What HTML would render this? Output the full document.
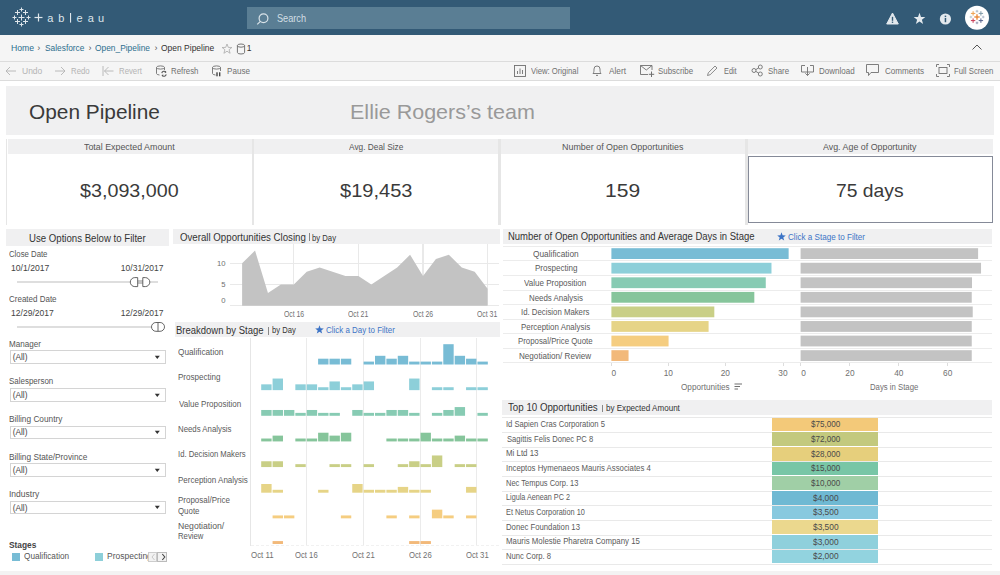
<!DOCTYPE html><html><head><meta charset="utf-8"><style>
html,body{margin:0;padding:0;}
body{width:1000px;height:575px;overflow:hidden;position:relative;background:#fff;font-family:"Liberation Sans",sans-serif;}
.t{position:absolute;white-space:nowrap;}
.r{position:absolute;box-sizing:border-box;}
svg.r{overflow:visible;}
</style></head><body>
<div class="r" style="left:0.00px;top:0.00px;width:1000.00px;height:35.00px;background:#335a76;"></div>
<div class="r" style="left:247.00px;top:7.00px;width:323.00px;height:21.50px;background:#5a7e94;"></div>
<svg class="r" style="left:254px;top:10px" width="18" height="18" viewBox="0 0 18 18"><circle cx="9.5" cy="8.3" r="4.4" fill="none" stroke="#d9e3e9" stroke-width="1.2"/><line x1="6.4" y1="11.4" x2="3.2" y2="14.4" stroke="#d9e3e9" stroke-width="1.2"/></svg>
<div class="t" style="left:277.39px;top:11.53px;font-size:10.5px;line-height:13.65px;color:#d3dee5;transform:scaleX(0.8729);transform-origin:0 0;">Search</div>
<svg class="r" style="left:0;top:0" width="120" height="35" viewBox="0 0 120 35"><line x1="18.5" y1="17.5" x2="24.5" y2="17.5" stroke="#dfe6eb" stroke-width="1.0"/><line x1="21.5" y1="14.5" x2="21.5" y2="20.5" stroke="#dfe6eb" stroke-width="1.0"/><line x1="15.0" y1="12.5" x2="20.0" y2="12.5" stroke="#dfe6eb" stroke-width="1.0"/><line x1="17.5" y1="10.0" x2="17.5" y2="15.0" stroke="#dfe6eb" stroke-width="1.0"/><line x1="23.0" y1="12.5" x2="28.0" y2="12.5" stroke="#dfe6eb" stroke-width="1.0"/><line x1="25.5" y1="10.0" x2="25.5" y2="15.0" stroke="#dfe6eb" stroke-width="1.0"/><line x1="15.0" y1="21.5" x2="20.0" y2="21.5" stroke="#dfe6eb" stroke-width="1.0"/><line x1="17.5" y1="19.0" x2="17.5" y2="24.0" stroke="#dfe6eb" stroke-width="1.0"/><line x1="23.0" y1="21.5" x2="28.0" y2="21.5" stroke="#dfe6eb" stroke-width="1.0"/><line x1="25.5" y1="19.0" x2="25.5" y2="24.0" stroke="#dfe6eb" stroke-width="1.0"/><line x1="19.5" y1="9.5" x2="23.5" y2="9.5" stroke="#dfe6eb" stroke-width="1.0"/><line x1="21.5" y1="7.5" x2="21.5" y2="11.5" stroke="#dfe6eb" stroke-width="1.0"/><line x1="19.5" y1="24.5" x2="23.5" y2="24.5" stroke="#dfe6eb" stroke-width="1.0"/><line x1="21.5" y1="22.5" x2="21.5" y2="26.5" stroke="#dfe6eb" stroke-width="1.0"/><line x1="12.5" y1="17.5" x2="16.5" y2="17.5" stroke="#dfe6eb" stroke-width="1.0"/><line x1="14.5" y1="15.5" x2="14.5" y2="19.5" stroke="#dfe6eb" stroke-width="1.0"/><line x1="26.5" y1="17.5" x2="30.5" y2="17.5" stroke="#dfe6eb" stroke-width="1.0"/><line x1="28.5" y1="15.5" x2="28.5" y2="19.5" stroke="#dfe6eb" stroke-width="1.0"/><line x1="34.5" y1="17.5" x2="42.5" y2="17.5" stroke="#dfe6eb" stroke-width="1.2"/><line x1="38.5" y1="13.5" x2="38.5" y2="21.5" stroke="#dfe6eb" stroke-width="1.2"/><rect x="70" y="13" width="1.1" height="9.6" fill="#dfe6eb"/></svg>
<div class="t" style="left:47.23px;top:10.94px;font-size:11px;line-height:14.3px;color:#dfe6eb;">a</div>
<div class="t" style="left:58.31px;top:10.94px;font-size:11px;line-height:14.3px;color:#dfe6eb;">b</div>
<div class="t" style="left:76.47px;top:10.94px;font-size:11px;line-height:14.3px;color:#dfe6eb;">e</div>
<div class="t" style="left:87.73px;top:10.94px;font-size:11px;line-height:14.3px;color:#dfe6eb;">a</div>
<div class="t" style="left:97.95px;top:10.94px;font-size:11px;line-height:14.3px;color:#dfe6eb;">u</div>
<svg class="r" style="left:885px;top:11px" width="15" height="15" viewBox="0 0 15 15"><path d="M7.5 2 L13.3 13 L1.7 13 Z" fill="#e3e9ee" stroke="#e3e9ee" stroke-width="1" stroke-linejoin="round"/><rect x="6.8" y="5.8" width="1.4" height="4" fill="#335a76"/><rect x="6.8" y="10.6" width="1.4" height="1.3" fill="#335a76"/></svg>
<svg class="r" style="left:912px;top:11px" width="15" height="15" viewBox="0 0 15 15"><path d="M7.5 1.8 L9 6 L13.3 6.1 L9.9 8.7 L11.1 12.9 L7.5 10.4 L3.9 12.9 L5.1 8.7 L1.7 6.1 L6 6 Z" fill="#e3e9ee"/></svg>
<svg class="r" style="left:938px;top:12px" width="15" height="15" viewBox="0 0 15 15"><circle cx="7.4" cy="7" r="5.6" fill="#e3e9ee"/><rect x="6.7" y="6" width="1.5" height="4.2" fill="#335a76"/><rect x="6.7" y="3.6" width="1.5" height="1.5" fill="#335a76"/></svg>
<svg class="r" style="left:964px;top:5px" width="26" height="26" viewBox="0 0 26 26"><circle cx="13" cy="12.85" r="12" fill="#ffffff"/><line x1="10.3" y1="12" x2="15.7" y2="12" stroke="#e8822f" stroke-width="1.3"/><line x1="13" y1="9.3" x2="13" y2="14.7" stroke="#e8822f" stroke-width="1.3"/><line x1="6.8999999999999995" y1="8.4" x2="11.3" y2="8.4" stroke="#eea04e" stroke-width="1.0"/><line x1="9.1" y1="6.2" x2="9.1" y2="10.600000000000001" stroke="#eea04e" stroke-width="1.0"/><line x1="14.7" y1="8.4" x2="19.099999999999998" y2="8.4" stroke="#7f9aa8" stroke-width="1.0"/><line x1="16.9" y1="6.2" x2="16.9" y2="10.600000000000001" stroke="#7f9aa8" stroke-width="1.0"/><line x1="6.8999999999999995" y1="15.6" x2="11.3" y2="15.6" stroke="#c83a52" stroke-width="1.0"/><line x1="9.1" y1="13.399999999999999" x2="9.1" y2="17.8" stroke="#c83a52" stroke-width="1.0"/><line x1="14.7" y1="15.6" x2="19.099999999999998" y2="15.6" stroke="#56628c" stroke-width="1.0"/><line x1="16.9" y1="13.399999999999999" x2="16.9" y2="17.8" stroke="#56628c" stroke-width="1.0"/><line x1="11.7" y1="6.2" x2="14.3" y2="6.2" stroke="#a8b6c2" stroke-width="0.9"/><line x1="13" y1="4.9" x2="13" y2="7.5" stroke="#a8b6c2" stroke-width="0.9"/><line x1="11.7" y1="17.9" x2="14.3" y2="17.9" stroke="#8a90ab" stroke-width="0.9"/><line x1="13" y1="16.599999999999998" x2="13" y2="19.2" stroke="#8a90ab" stroke-width="0.9"/><line x1="5.6000000000000005" y1="12" x2="8.200000000000001" y2="12" stroke="#b4c2cb" stroke-width="0.9"/><line x1="6.9" y1="10.7" x2="6.9" y2="13.3" stroke="#b4c2cb" stroke-width="0.9"/><line x1="17.9" y1="12" x2="20.5" y2="12" stroke="#a9b4c6" stroke-width="0.9"/><line x1="19.2" y1="10.7" x2="19.2" y2="13.3" stroke="#a9b4c6" stroke-width="0.9"/></svg>
<div class="r" style="left:0.00px;top:35.00px;width:1000.00px;height:26.00px;background:#f5f5f5;"></div>
<div class="r" style="left:0.00px;top:61.00px;width:1000.00px;height:1.00px;background:#dcdcdc;"></div>
<div class="t" style="left:11.31px;top:41.73px;font-size:9.3px;line-height:12.09px;color:#2c6e8e;transform:scaleX(0.9313);transform-origin:0 0;">Home</div>
<div class="t" style="left:37.29px;top:42.83px;font-size:9px;line-height:11.7px;color:#555;">›</div>
<div class="t" style="left:45.12px;top:41.73px;font-size:9.3px;line-height:12.09px;color:#2c6e8e;transform:scaleX(0.8978);transform-origin:0 0;">Salesforce</div>
<div class="t" style="left:88.49px;top:42.83px;font-size:9px;line-height:11.7px;color:#555;">›</div>
<div class="t" style="left:95.42px;top:41.73px;font-size:9.3px;line-height:12.09px;color:#2c6e8e;transform:scaleX(0.9008);transform-origin:0 0;">Open_Pipeline</div>
<div class="t" style="left:154.49px;top:42.83px;font-size:9px;line-height:11.7px;color:#555;">›</div>
<div class="t" style="left:160.92px;top:41.73px;font-size:9.3px;line-height:12.09px;color:#333;transform:scaleX(0.9120);transform-origin:0 0;">Open Pipeline</div>
<svg class="r" style="left:221px;top:42.5px" width="12" height="12" viewBox="0 0 12 12"><path d="M6 1 L7.3 4.4 L10.9 4.5 L8.1 6.7 L9.1 10.3 L6 8.2 L2.9 10.3 L3.9 6.7 L1.1 4.5 L4.7 4.4 Z" fill="none" stroke="#aaa" stroke-width="0.8"/></svg>
<svg class="r" style="left:236px;top:42.5px" width="10" height="12" viewBox="0 0 10 12"><ellipse cx="5" cy="2.6" rx="3.6" ry="1.6" fill="none" stroke="#666" stroke-width="0.9"/><path d="M1.4 2.6 V9.4 A3.6 1.6 0 0 0 8.6 9.4 V2.6" fill="none" stroke="#666" stroke-width="0.9"/></svg>
<div class="t" style="left:246.76px;top:43.33px;font-size:8.5px;line-height:11.05px;color:#333;">1</div>
<svg class="r" style="left:971px;top:43px" width="12" height="8" viewBox="0 0 12 8"><path d="M1.5 6.5 L6 2 L10.5 6.5" fill="none" stroke="#555" stroke-width="1"/></svg>
<div class="r" style="left:0.00px;top:62.00px;width:1000.00px;height:18.00px;background:#f5f5f5;"></div>
<div class="r" style="left:0.00px;top:80.00px;width:1000.00px;height:1.00px;background:#dcdcdc;"></div>
<div class="t" style="left:21.86px;top:65.83px;font-size:9px;line-height:11.7px;color:#b4b4b4;transform:scaleX(0.9426);transform-origin:0 0;">Undo</div>
<div class="t" style="left:71.18px;top:65.83px;font-size:9px;line-height:11.7px;color:#b4b4b4;transform:scaleX(0.8664);transform-origin:0 0;">Redo</div>
<div class="t" style="left:118.88px;top:65.83px;font-size:9px;line-height:11.7px;color:#b4b4b4;transform:scaleX(0.8664);transform-origin:0 0;">Revert</div>
<div class="t" style="left:171.37px;top:65.83px;font-size:9px;line-height:11.7px;color:#707070;transform:scaleX(0.8710);transform-origin:0 0;">Refresh</div>
<div class="t" style="left:227.35px;top:65.83px;font-size:9px;line-height:11.7px;color:#707070;transform:scaleX(0.9020);transform-origin:0 0;">Pause</div>
<div class="t" style="left:531.16px;top:65.83px;font-size:9px;line-height:11.7px;color:#707070;transform:scaleX(0.8553);transform-origin:0 0;">View: Original</div>
<div class="t" style="left:608.70px;top:65.83px;font-size:9px;line-height:11.7px;color:#707070;transform:scaleX(0.9160);transform-origin:0 0;">Alert</div>
<div class="t" style="left:658.24px;top:65.83px;font-size:9px;line-height:11.7px;color:#707070;transform:scaleX(0.8777);transform-origin:0 0;">Subscribe</div>
<div class="t" style="left:724.41px;top:65.83px;font-size:9px;line-height:11.7px;color:#707070;transform:scaleX(0.8155);transform-origin:0 0;">Edit</div>
<div class="t" style="left:768.25px;top:65.83px;font-size:9px;line-height:11.7px;color:#707070;transform:scaleX(0.8759);transform-origin:0 0;">Share</div>
<div class="t" style="left:819.36px;top:65.83px;font-size:9px;line-height:11.7px;color:#707070;transform:scaleX(0.8889);transform-origin:0 0;">Download</div>
<div class="t" style="left:885.20px;top:65.83px;font-size:9px;line-height:11.7px;color:#707070;transform:scaleX(0.8982);transform-origin:0 0;">Comments</div>
<div class="t" style="left:953.88px;top:65.83px;font-size:9px;line-height:11.7px;color:#707070;transform:scaleX(0.8644);transform-origin:0 0;">Full Screen</div>
<svg class="r" style="left:5px;top:65px" width="12" height="12" viewBox="0 0 12 12"><path d="M1 6 H11 M1 6 L5 2 M1 6 L5 10" fill="none" stroke="#b4b4b4" stroke-width="0.9"/></svg>
<svg class="r" style="left:54px;top:65px" width="12" height="12" viewBox="0 0 12 12"><path d="M1 6 H11 M11 6 L7 2 M11 6 L7 10" fill="none" stroke="#b4b4b4" stroke-width="0.9"/></svg>
<svg class="r" style="left:102px;top:65px" width="12" height="12" viewBox="0 0 12 12"><path d="M1 1 V11 M2.5 6 H11.5 M2.5 6 L6.5 2 M2.5 6 L6.5 10" fill="none" stroke="#b4b4b4" stroke-width="0.9"/></svg>
<svg class="r" style="left:150px;top:62px" width="80" height="18" viewBox="0 0 80 18"><ellipse cx="10.5" cy="5.5" rx="4" ry="1.6" fill="none" stroke="#707070" stroke-width="0.9"/><path d="M6.5 5.5 V11.5 A4 1.6 0 0 0 9.5 13" fill="none" stroke="#707070" stroke-width="0.9"/><path d="M14.5 5.5 V8" fill="none" stroke="#707070" stroke-width="0.9"/><path d="M11.8 11.2 A2.3 2.3 0 0 1 16 10.3 M16.2 12.3 A2.3 2.3 0 0 1 12 13.2" fill="none" stroke="#555" stroke-width="1.1"/><path d="M15.2 9 L16.4 10.6 L14.6 10.9 Z M12.8 14.5 L11.6 12.9 L13.4 12.6 Z" fill="#555"/><ellipse cx="66.5" cy="5.5" rx="4" ry="1.6" fill="none" stroke="#707070" stroke-width="0.9"/><path d="M62.5 5.5 V11.5 A4 1.6 0 0 0 65.5 13" fill="none" stroke="#707070" stroke-width="0.9"/><path d="M70.5 5.5 V9" fill="none" stroke="#707070" stroke-width="0.9"/><rect x="66.3" y="10.3" width="1.4" height="4" fill="#444"/><rect x="69" y="10.3" width="1.4" height="4" fill="#444"/></svg>
<svg class="r" style="left:514px;top:65px" width="12" height="12" viewBox="0 0 12 12"><rect x="0.5" y="0.5" width="11" height="11" fill="none" stroke="#707070" stroke-width="0.9"/><path d="M3.5 9 V6 M6 9 V3.5 M8.5 9 V5" stroke="#707070" stroke-width="0.9"/></svg>
<svg class="r" style="left:591px;top:64px" width="12" height="13" viewBox="0 0 12 13"><path d="M2 9.5 C3 8.5 3 6.5 3 5 A3 3 0 0 1 9 5 C9 6.5 9 8.5 10 9.5 Z" fill="none" stroke="#707070" stroke-width="0.9"/><path d="M5 11 A1.2 1.2 0 0 0 7 11" fill="none" stroke="#707070" stroke-width="0.9"/></svg>
<svg class="r" style="left:640px;top:64px" width="15" height="14" viewBox="0 0 15 14"><path d="M0.5 1.5 H12 V6 M0.5 1.5 V10.5 H8 M0.5 1.5 L6.3 6 L12 1.5" fill="none" stroke="#707070" stroke-width="0.9"/><path d="M11.5 7.5 V13 M8.8 10.3 H14.2" stroke="#707070" stroke-width="1"/></svg>
<svg class="r" style="left:706px;top:64px" width="12" height="13" viewBox="0 0 12 13"><path d="M1.5 11.5 L2.3 8.8 L9 2 L11 4 L4.2 10.7 Z" fill="none" stroke="#707070" stroke-width="0.8"/></svg>
<svg class="r" style="left:751px;top:64px" width="12" height="13" viewBox="0 0 12 13"><circle cx="3" cy="6.5" r="2" fill="none" stroke="#707070" stroke-width="0.9"/><circle cx="9.3" cy="3" r="2" fill="none" stroke="#707070" stroke-width="0.9"/><circle cx="9.3" cy="10" r="2" fill="none" stroke="#707070" stroke-width="0.9"/><path d="M4.8 5.6 L7.5 4 M4.8 7.4 L7.5 9" stroke="#707070" stroke-width="0.9"/></svg>
<svg class="r" style="left:801px;top:64px" width="13" height="13" viewBox="0 0 13 13"><path d="M4 1.5 H0.5 V8 H12.5 V1.5 H9" fill="none" stroke="#707070" stroke-width="0.9"/><path d="M6.5 3 V11.5 M4.3 9.3 L6.5 11.5 L8.7 9.3" fill="none" stroke="#707070" stroke-width="0.9"/></svg>
<svg class="r" style="left:866px;top:64px" width="14" height="13" viewBox="0 0 14 13"><path d="M0.5 0.5 H12.5 V8.5 H5 L2.5 11.5 V8.5 H0.5 Z" fill="none" stroke="#707070" stroke-width="0.9"/></svg>
<svg class="r" style="left:936px;top:64px" width="14" height="13" viewBox="0 0 14 13"><rect x="3" y="3.5" width="8" height="6" fill="none" stroke="#707070" stroke-width="0.9"/><path d="M0.5 3 V0.5 H3 M11 0.5 H13.5 V3 M13.5 10 V12.5 H11 M3 12.5 H0.5 V10" fill="none" stroke="#707070" stroke-width="0.9"/></svg>
<div class="r" style="left:6.00px;top:86.00px;width:988.00px;height:48.50px;background:#f0f0f1;"></div>
<div class="t" style="left:29.46px;top:98.07px;font-size:21px;line-height:27.3px;color:#3a3a3a;transform:scaleX(0.9924);transform-origin:0 0;">Open Pipeline</div>
<div class="t" style="left:350.38px;top:97.67px;font-size:21px;line-height:27.3px;color:#999;transform:scaleX(1.0245);transform-origin:0 0;">Ellie Rogers’s team</div>
<div class="r" style="left:5.80px;top:139.00px;width:1.70px;height:86.00px;background:#e6e6e6;"></div>
<div class="r" style="left:7.50px;top:139.00px;width:244.00px;height:14.50px;background:#f0f0f1;"></div>
<div class="r" style="left:254.00px;top:139.00px;width:244.30px;height:14.50px;background:#f0f0f1;"></div>
<div class="r" style="left:500.80px;top:139.00px;width:244.20px;height:14.50px;background:#f0f0f1;"></div>
<div class="r" style="left:747.60px;top:139.00px;width:245.40px;height:14.50px;background:#f0f0f1;"></div>
<div class="r" style="left:251.50px;top:139.00px;width:2.50px;height:86.00px;background:#e6e6e6;"></div>
<div class="r" style="left:498.30px;top:139.00px;width:2.50px;height:86.00px;background:#e6e6e6;"></div>
<div class="r" style="left:745.00px;top:139.00px;width:2.60px;height:86.00px;background:#e6e6e6;"></div>
<div class="r" style="left:748px;top:156px;width:244.5px;height:67.2px;border:1.2px solid #858a98;"></div>
<div class="t" style="left:83.62px;top:140.53px;font-size:9.3px;line-height:12.09px;color:#555;transform:scaleX(0.9530);transform-origin:0 0;">Total Expected Amount</div>
<div class="t" style="left:348.50px;top:140.53px;font-size:9.3px;line-height:12.09px;color:#555;transform:scaleX(0.8940);transform-origin:0 0;">Avg. Deal Size</div>
<div class="t" style="left:561.79px;top:140.53px;font-size:9.3px;line-height:12.09px;color:#555;transform:scaleX(0.9594);transform-origin:0 0;">Number of Open Opportunities</div>
<div class="t" style="left:822.50px;top:140.53px;font-size:9.3px;line-height:12.09px;color:#555;transform:scaleX(0.9534);transform-origin:0 0;">Avg. Age of Opportunity</div>
<div class="t" style="left:80.00px;top:178.66px;font-size:18.5px;line-height:24.05px;color:#3a3a3a;transform:scaleX(1.0658);transform-origin:0 0;">$3,093,000</div>
<div class="t" style="left:339.80px;top:178.66px;font-size:18.5px;line-height:24.05px;color:#3a3a3a;transform:scaleX(1.0841);transform-origin:0 0;">$19,453</div>
<div class="t" style="left:604.92px;top:178.66px;font-size:18.5px;line-height:24.05px;color:#3a3a3a;transform:scaleX(1.1371);transform-origin:0 0;">159</div>
<div class="t" style="left:835.54px;top:178.66px;font-size:18.5px;line-height:24.05px;color:#3a3a3a;transform:scaleX(1.0431);transform-origin:0 0;">75 days</div>
<div class="r" style="left:6.10px;top:229.20px;width:163.20px;height:16.50px;background:#f0f0f1;"></div>
<div class="t" style="left:28.88px;top:231.63px;font-size:10px;line-height:13.0px;color:#333;transform:scaleX(0.9630);transform-origin:0 0;">Use Options Below to Filter</div>
<div class="t" style="left:8.81px;top:249.13px;font-size:8.3px;line-height:10.79px;color:#555;transform:scaleX(0.9365);transform-origin:0 0;">Close Date</div>
<div class="t" style="left:11.25px;top:262.83px;font-size:8.5px;line-height:11.05px;color:#444;transform:scaleX(1.0146);transform-origin:0 0;">10/1/2017</div>
<div class="t" style="left:120.86px;top:262.83px;font-size:8.5px;line-height:11.05px;color:#444;">10/31/2017</div>
<div class="r" style="left:17.20px;top:281.00px;width:140.60px;height:2.00px;background:#dedede;"></div>
<div class="r" style="left:137.00px;top:280.30px;width:6.50px;height:3.40px;background:#c4c4c4;"></div>
<svg class="r" style="left:129px;top:276px" width="23" height="12" viewBox="0 0 23 12"><path d="M8.7 1.6 H5.8 A4.5 4.5 0 0 0 5.8 10.6 H8.7 Z" fill="#fff" stroke="#555" stroke-width="0.9"/><path d="M13.8 1.6 H16.3 A4.5 4.5 0 0 1 16.3 10.6 H13.8 Z" fill="#fff" stroke="#555" stroke-width="0.9"/></svg>
<div class="t" style="left:8.80px;top:293.93px;font-size:8.3px;line-height:10.79px;color:#555;transform:scaleX(0.9639);transform-origin:0 0;">Created Date</div>
<div class="t" style="left:11.26px;top:307.73px;font-size:8.5px;line-height:11.05px;color:#444;transform:scaleX(1.0053);transform-origin:0 0;">12/29/2017</div>
<div class="t" style="left:120.86px;top:307.73px;font-size:8.5px;line-height:11.05px;color:#444;">12/29/2017</div>
<div class="r" style="left:17.20px;top:325.50px;width:140.60px;height:2.00px;background:#dedede;"></div>
<svg class="r" style="left:150px;top:321px" width="16" height="12" viewBox="0 0 16 12"><rect x="1.5" y="1.5" width="13" height="8.8" rx="4.4" fill="#fff" stroke="#555" stroke-width="0.9"/><path d="M8 1.5 V10.3" stroke="#555" stroke-width="0.9"/></svg>
<div class="t" style="left:8.95px;top:338.93px;font-size:8.3px;line-height:10.79px;color:#555;transform:scaleX(0.9732);transform-origin:0 0;">Manager</div>
<div class="r" style="left:10px;top:350.1px;width:155.5px;height:13.8px;border:0.8px solid #d4d4d4;background:#fff"></div>
<div class="t" style="left:12.70px;top:352.03px;font-size:8.3px;line-height:10.79px;color:#444;">(All)</div>
<svg class="r" style="left:154px;top:354.6px" width="7" height="5" viewBox="0 0 7 5"><path d="M0.8 0.8 H5.8 L3.3 4 Z" fill="#333"/></svg>
<div class="t" style="left:9.24px;top:376.23px;font-size:8.3px;line-height:10.79px;color:#555;transform:scaleX(0.9594);transform-origin:0 0;">Salesperson</div>
<div class="r" style="left:10px;top:388px;width:155.5px;height:13.8px;border:0.8px solid #d4d4d4;background:#fff"></div>
<div class="t" style="left:12.70px;top:389.93px;font-size:8.3px;line-height:10.79px;color:#444;">(All)</div>
<svg class="r" style="left:154px;top:392.5px" width="7" height="5" viewBox="0 0 7 5"><path d="M0.8 0.8 H5.8 L3.3 4 Z" fill="#333"/></svg>
<div class="t" style="left:8.94px;top:413.93px;font-size:8.3px;line-height:10.79px;color:#555;">Billing Country</div>
<div class="r" style="left:10px;top:425.5px;width:155.5px;height:13.8px;border:0.8px solid #d4d4d4;background:#fff"></div>
<div class="t" style="left:12.70px;top:427.43px;font-size:8.3px;line-height:10.79px;color:#444;">(All)</div>
<svg class="r" style="left:154px;top:430.0px" width="7" height="5" viewBox="0 0 7 5"><path d="M0.8 0.8 H5.8 L3.3 4 Z" fill="#333"/></svg>
<div class="t" style="left:8.94px;top:451.63px;font-size:8.3px;line-height:10.79px;color:#555;">Billing State/Province</div>
<div class="r" style="left:10px;top:463.3px;width:155.5px;height:13.8px;border:0.8px solid #d4d4d4;background:#fff"></div>
<div class="t" style="left:12.70px;top:465.23px;font-size:8.3px;line-height:10.79px;color:#444;">(All)</div>
<svg class="r" style="left:154px;top:467.8px" width="7" height="5" viewBox="0 0 7 5"><path d="M0.8 0.8 H5.8 L3.3 4 Z" fill="#333"/></svg>
<div class="t" style="left:8.83px;top:489.23px;font-size:8.3px;line-height:10.79px;color:#555;transform:scaleX(1.0257);transform-origin:0 0;">Industry</div>
<div class="r" style="left:10px;top:500.6px;width:155.5px;height:13.8px;border:0.8px solid #d4d4d4;background:#fff"></div>
<div class="t" style="left:12.70px;top:502.53px;font-size:8.3px;line-height:10.79px;color:#444;">(All)</div>
<svg class="r" style="left:154px;top:505.1px" width="7" height="5" viewBox="0 0 7 5"><path d="M0.8 0.8 H5.8 L3.3 4 Z" fill="#333"/></svg>
<div class="t" style="left:8.85px;top:539.03px;font-size:9.5px;line-height:12.35px;color:#444;font-weight:bold;transform:scaleX(0.8788);transform-origin:0 0;">Stages</div>
<div class="r" style="left:12.20px;top:553.30px;width:7.80px;height:7.70px;background:#78bcd5;"></div>
<div class="t" style="left:24.33px;top:551.33px;font-size:8.3px;line-height:10.79px;color:#555;transform:scaleX(0.9880);transform-origin:0 0;">Qualification</div>
<div class="r" style="left:95.40px;top:553.30px;width:8.10px;height:7.70px;background:#8dcfd9;"></div>
<div class="r" style="left:106px;top:548px;width:42px;height:16px;overflow:hidden"></div>
<div class="t" style="left:107.22px;top:551.33px;font-size:8.3px;line-height:10.79px;color:#555;transform:scaleX(1.0230);transform-origin:0 0;">Prospecting</div>
<div class="r" style="left:148.2px;top:551.7px;width:9px;height:10px;border:0.6px solid #ccc;background:#f2f2f2"></div>
<div class="r" style="left:157.3px;top:551.7px;width:10px;height:10px;border:0.6px solid #bbb;background:#f2f2f2"></div>
<svg class="r" style="left:150px;top:553px" width="7" height="8" viewBox="0 0 7 8"><path d="M4.5 1 L2 4 L4.5 7" fill="none" stroke="#c8c8c8" stroke-width="1"/></svg>
<svg class="r" style="left:159.5px;top:553px" width="7" height="8" viewBox="0 0 7 8"><path d="M2.3 1 L4.8 4 L2.3 7" fill="none" stroke="#444" stroke-width="1.1"/></svg>
<div class="r" style="left:0.00px;top:570.50px;width:1000.00px;height:4.50px;background:#f3f3f3;"></div>
<div class="r" style="left:173.40px;top:229.00px;width:326.40px;height:14.70px;background:#f0f0f1;"></div>
<div class="t" style="left:179.76px;top:231.03px;font-size:10px;line-height:13.0px;color:#333;transform:scaleX(0.9678);transform-origin:0 0;">Overall Opportunities Closing</div>
<div class="r" style="left:309.00px;top:233.20px;width:1.00px;height:8.30px;background:#888;"></div>
<div class="t" style="left:312.00px;top:232.73px;font-size:8.3px;line-height:10.79px;color:#333;transform:scaleX(0.9298);transform-origin:0 0;">by Day</div>
<div class="r" style="left:230.00px;top:263.00px;width:269.00px;height:1.40px;background:#e9e9e9;"></div>
<div class="r" style="left:230.00px;top:283.80px;width:269.00px;height:1.40px;background:#e9e9e9;"></div>
<div class="r" style="left:230.00px;top:305.10px;width:269.00px;height:1.40px;background:#e9e9e9;"></div>
<div class="r" style="left:293.10px;top:243.70px;width:1.40px;height:62.30px;background:#e9e9e9;"></div>
<div class="r" style="left:357.70px;top:243.70px;width:1.40px;height:62.30px;background:#e9e9e9;"></div>
<div class="r" style="left:422.30px;top:243.70px;width:1.40px;height:62.30px;background:#e9e9e9;"></div>
<div class="r" style="left:486.90px;top:243.70px;width:1.40px;height:62.30px;background:#e9e9e9;"></div>
<svg class="r" style="left:0;top:0" width="1000" height="575"><polygon points="242.12,305.70 242.12,263.30 255.04,250.58 267.96,292.98 280.88,284.50 293.80,284.50 306.72,271.78 319.64,267.54 332.56,271.78 345.48,276.02 358.40,276.02 371.32,284.50 384.24,276.02 397.16,267.54 410.08,254.82 423.00,276.02 435.92,259.06 448.84,254.82 461.76,267.54 474.68,271.78 487.60,288.74 487.60,305.70" fill="#c3c3c3"/></svg>
<div class="t" style="left:217.02px;top:258.63px;font-size:7.7px;line-height:10.01px;color:#707070;">10</div>
<div class="t" style="left:221.33px;top:279.73px;font-size:7.7px;line-height:10.01px;color:#707070;">5</div>
<div class="t" style="left:221.30px;top:295.53px;font-size:7.7px;line-height:10.01px;color:#707070;">0</div>
<div class="t" style="left:283.69px;top:308.73px;font-size:8.3px;line-height:10.79px;color:#707070;transform:scaleX(0.8257);transform-origin:0 0;">Oct 16</div>
<div class="t" style="left:348.29px;top:308.73px;font-size:8.3px;line-height:10.79px;color:#707070;transform:scaleX(0.8271);transform-origin:0 0;">Oct 21</div>
<div class="t" style="left:412.89px;top:308.73px;font-size:8.3px;line-height:10.79px;color:#707070;transform:scaleX(0.8257);transform-origin:0 0;">Oct 26</div>
<div class="t" style="left:477.49px;top:308.73px;font-size:8.3px;line-height:10.79px;color:#707070;transform:scaleX(0.8271);transform-origin:0 0;">Oct 31</div>
<div class="r" style="left:174.50px;top:322.00px;width:325.30px;height:15.30px;background:#f0f0f1;"></div>
<div class="t" style="left:175.99px;top:323.63px;font-size:10px;line-height:13.0px;color:#333;transform:scaleX(0.9478);transform-origin:0 0;">Breakdown by Stage</div>
<div class="r" style="left:268.00px;top:327.00px;width:1.00px;height:7.60px;background:#888;"></div>
<div class="t" style="left:271.70px;top:325.33px;font-size:8.3px;line-height:10.79px;color:#333;transform:scaleX(0.9180);transform-origin:0 0;">by Day</div>
<svg class="r" style="left:315px;top:325px" width="9" height="9" viewBox="0 0 9 9"><path d="M4.5 0.3 L5.6 3.3 L8.8 3.4 L6.3 5.4 L7.2 8.6 L4.5 6.8 L1.8 8.6 L2.7 5.4 L0.2 3.4 L3.4 3.3 Z" fill="#3d74c6"/></svg>
<div class="t" style="left:326.35px;top:324.93px;font-size:8.5px;line-height:11.05px;color:#3d74c6;transform:scaleX(0.9337);transform-origin:0 0;">Click a Day to Filter</div>
<div class="r" style="left:249.80px;top:338.00px;width:1.00px;height:208.00px;background:#e6e6e6;"></div>
<div class="r" style="left:305.75px;top:338.00px;width:1.00px;height:208.00px;background:#ebebeb;"></div>
<div class="r" style="left:362.65px;top:338.00px;width:1.00px;height:208.00px;background:#ebebeb;"></div>
<div class="r" style="left:419.55px;top:338.00px;width:1.00px;height:208.00px;background:#ebebeb;"></div>
<div class="r" style="left:476.45px;top:338.00px;width:1.00px;height:208.00px;background:#ebebeb;"></div>
<svg class="r" style="left:0;top:0" width="1000" height="575"><rect x="318.10" y="358.70" width="10.4" height="5.80" fill="#78bcd5"/><rect x="329.48" y="358.70" width="10.4" height="5.80" fill="#78bcd5"/><rect x="340.86" y="358.70" width="10.4" height="5.80" fill="#78bcd5"/><rect x="363.62" y="361.60" width="10.4" height="2.90" fill="#78bcd5"/><rect x="375.00" y="355.80" width="10.4" height="8.70" fill="#78bcd5"/><rect x="386.38" y="358.70" width="10.4" height="5.80" fill="#78bcd5"/><rect x="397.76" y="355.80" width="10.4" height="8.70" fill="#78bcd5"/><rect x="409.14" y="361.60" width="10.4" height="2.90" fill="#78bcd5"/><rect x="420.52" y="361.60" width="10.4" height="2.90" fill="#78bcd5"/><rect x="431.90" y="361.60" width="10.4" height="2.90" fill="#78bcd5"/><rect x="443.28" y="344.20" width="10.4" height="20.30" fill="#78bcd5"/><rect x="454.66" y="355.80" width="10.4" height="8.70" fill="#78bcd5"/><rect x="466.04" y="358.70" width="10.4" height="5.80" fill="#78bcd5"/><rect x="477.42" y="361.60" width="10.4" height="2.90" fill="#78bcd5"/><rect x="261.20" y="384.34" width="10.4" height="5.80" fill="#8dcfd9"/><rect x="272.58" y="378.54" width="10.4" height="11.60" fill="#8dcfd9"/><rect x="295.34" y="384.34" width="10.4" height="5.80" fill="#8dcfd9"/><rect x="306.72" y="384.34" width="10.4" height="5.80" fill="#8dcfd9"/><rect x="318.10" y="387.24" width="10.4" height="2.90" fill="#8dcfd9"/><rect x="329.48" y="381.44" width="10.4" height="8.70" fill="#8dcfd9"/><rect x="340.86" y="387.24" width="10.4" height="2.90" fill="#8dcfd9"/><rect x="352.24" y="384.34" width="10.4" height="5.80" fill="#8dcfd9"/><rect x="363.62" y="381.44" width="10.4" height="8.70" fill="#8dcfd9"/><rect x="409.14" y="378.54" width="10.4" height="11.60" fill="#8dcfd9"/><rect x="431.90" y="387.24" width="10.4" height="2.90" fill="#8dcfd9"/><rect x="443.28" y="387.24" width="10.4" height="2.90" fill="#8dcfd9"/><rect x="466.04" y="387.24" width="10.4" height="2.90" fill="#8dcfd9"/><rect x="477.42" y="387.24" width="10.4" height="2.90" fill="#8dcfd9"/><rect x="261.20" y="409.98" width="10.4" height="5.80" fill="#87cbb3"/><rect x="272.58" y="409.98" width="10.4" height="5.80" fill="#87cbb3"/><rect x="283.96" y="409.98" width="10.4" height="5.80" fill="#87cbb3"/><rect x="295.34" y="412.88" width="10.4" height="2.90" fill="#87cbb3"/><rect x="306.72" y="409.98" width="10.4" height="5.80" fill="#87cbb3"/><rect x="318.10" y="412.88" width="10.4" height="2.90" fill="#87cbb3"/><rect x="329.48" y="412.88" width="10.4" height="2.90" fill="#87cbb3"/><rect x="352.24" y="409.98" width="10.4" height="5.80" fill="#87cbb3"/><rect x="363.62" y="412.88" width="10.4" height="2.90" fill="#87cbb3"/><rect x="375.00" y="412.88" width="10.4" height="2.90" fill="#87cbb3"/><rect x="386.38" y="409.98" width="10.4" height="5.80" fill="#87cbb3"/><rect x="397.76" y="409.98" width="10.4" height="5.80" fill="#87cbb3"/><rect x="409.14" y="412.88" width="10.4" height="2.90" fill="#87cbb3"/><rect x="431.90" y="412.88" width="10.4" height="2.90" fill="#87cbb3"/><rect x="443.28" y="409.98" width="10.4" height="5.80" fill="#87cbb3"/><rect x="454.66" y="407.08" width="10.4" height="8.70" fill="#87cbb3"/><rect x="477.42" y="412.88" width="10.4" height="2.90" fill="#87cbb3"/><rect x="261.20" y="438.52" width="10.4" height="2.90" fill="#86c59b"/><rect x="272.58" y="435.62" width="10.4" height="5.80" fill="#86c59b"/><rect x="295.34" y="438.52" width="10.4" height="2.90" fill="#86c59b"/><rect x="306.72" y="438.52" width="10.4" height="2.90" fill="#86c59b"/><rect x="318.10" y="432.72" width="10.4" height="8.70" fill="#86c59b"/><rect x="329.48" y="435.62" width="10.4" height="5.80" fill="#86c59b"/><rect x="340.86" y="432.72" width="10.4" height="8.70" fill="#86c59b"/><rect x="386.38" y="438.52" width="10.4" height="2.90" fill="#86c59b"/><rect x="397.76" y="438.52" width="10.4" height="2.90" fill="#86c59b"/><rect x="409.14" y="438.52" width="10.4" height="2.90" fill="#86c59b"/><rect x="420.52" y="432.72" width="10.4" height="8.70" fill="#86c59b"/><rect x="431.90" y="438.52" width="10.4" height="2.90" fill="#86c59b"/><rect x="443.28" y="438.52" width="10.4" height="2.90" fill="#86c59b"/><rect x="454.66" y="435.62" width="10.4" height="5.80" fill="#86c59b"/><rect x="466.04" y="438.52" width="10.4" height="2.90" fill="#86c59b"/><rect x="477.42" y="438.52" width="10.4" height="2.90" fill="#86c59b"/><rect x="261.20" y="461.26" width="10.4" height="5.80" fill="#c9cf86"/><rect x="272.58" y="461.26" width="10.4" height="5.80" fill="#c9cf86"/><rect x="295.34" y="464.16" width="10.4" height="2.90" fill="#c9cf86"/><rect x="329.48" y="464.16" width="10.4" height="2.90" fill="#c9cf86"/><rect x="340.86" y="464.16" width="10.4" height="2.90" fill="#c9cf86"/><rect x="363.62" y="464.16" width="10.4" height="2.90" fill="#c9cf86"/><rect x="397.76" y="464.16" width="10.4" height="2.90" fill="#c9cf86"/><rect x="409.14" y="461.26" width="10.4" height="5.80" fill="#c9cf86"/><rect x="420.52" y="464.16" width="10.4" height="2.90" fill="#c9cf86"/><rect x="431.90" y="455.46" width="10.4" height="11.60" fill="#c9cf86"/><rect x="454.66" y="464.16" width="10.4" height="2.90" fill="#c9cf86"/><rect x="466.04" y="464.16" width="10.4" height="2.90" fill="#c9cf86"/><rect x="261.20" y="484.00" width="10.4" height="8.70" fill="#e6d487"/><rect x="272.58" y="489.80" width="10.4" height="2.90" fill="#e6d487"/><rect x="318.10" y="489.80" width="10.4" height="2.90" fill="#e6d487"/><rect x="352.24" y="484.00" width="10.4" height="8.70" fill="#e6d487"/><rect x="363.62" y="489.80" width="10.4" height="2.90" fill="#e6d487"/><rect x="375.00" y="489.80" width="10.4" height="2.90" fill="#e6d487"/><rect x="386.38" y="489.80" width="10.4" height="2.90" fill="#e6d487"/><rect x="397.76" y="486.90" width="10.4" height="5.80" fill="#e6d487"/><rect x="409.14" y="489.80" width="10.4" height="2.90" fill="#e6d487"/><rect x="420.52" y="489.80" width="10.4" height="2.90" fill="#e6d487"/><rect x="466.04" y="486.90" width="10.4" height="5.80" fill="#e6d487"/><rect x="272.58" y="515.44" width="10.4" height="2.90" fill="#f5cd80"/><rect x="283.96" y="515.44" width="10.4" height="2.90" fill="#f5cd80"/><rect x="340.86" y="515.44" width="10.4" height="2.90" fill="#f5cd80"/><rect x="386.38" y="515.44" width="10.4" height="2.90" fill="#f5cd80"/><rect x="409.14" y="515.44" width="10.4" height="2.90" fill="#f5cd80"/><rect x="431.90" y="509.64" width="10.4" height="8.70" fill="#f5cd80"/><rect x="443.28" y="515.44" width="10.4" height="2.90" fill="#f5cd80"/><rect x="466.04" y="515.44" width="10.4" height="2.90" fill="#f5cd80"/><rect x="272.58" y="541.08" width="10.4" height="2.90" fill="#f2b97a"/><rect x="409.14" y="541.08" width="10.4" height="2.90" fill="#f2b97a"/><rect x="420.52" y="541.08" width="10.4" height="2.90" fill="#f2b97a"/></svg>
<div class="t" style="left:178.38px;top:346.93px;font-size:8.8px;line-height:11.44px;color:#5a5a5a;transform:scaleX(0.9382);transform-origin:0 0;">Qualification</div>
<div class="t" style="left:178.11px;top:372.43px;font-size:8.8px;line-height:11.44px;color:#5a5a5a;transform:scaleX(0.9129);transform-origin:0 0;">Prospecting</div>
<div class="t" style="left:178.71px;top:398.53px;font-size:8.8px;line-height:11.44px;color:#5a5a5a;transform:scaleX(0.9097);transform-origin:0 0;">Value Proposition</div>
<div class="t" style="left:178.12px;top:423.83px;font-size:8.8px;line-height:11.44px;color:#5a5a5a;transform:scaleX(0.8886);transform-origin:0 0;">Needs Analysis</div>
<div class="t" style="left:178.06px;top:449.33px;font-size:8.8px;line-height:11.44px;color:#5a5a5a;transform:scaleX(0.8751);transform-origin:0 0;">Id. Decision Makers</div>
<div class="t" style="left:178.11px;top:474.53px;font-size:8.8px;line-height:11.44px;color:#5a5a5a;transform:scaleX(0.9100);transform-origin:0 0;">Perception Analysis</div>
<div class="t" style="left:178.11px;top:495.43px;font-size:8.8px;line-height:11.44px;color:#5a5a5a;transform:scaleX(0.9064);transform-origin:0 0;">Proposal/Price</div>
<div class="t" style="left:178.40px;top:506.13px;font-size:8.8px;line-height:11.44px;color:#5a5a5a;transform:scaleX(0.8949);transform-origin:0 0;">Quote</div>
<div class="t" style="left:178.06px;top:521.23px;font-size:8.8px;line-height:11.44px;color:#5a5a5a;transform:scaleX(0.9841);transform-origin:0 0;">Negotiation/</div>
<div class="t" style="left:178.13px;top:531.23px;font-size:8.8px;line-height:11.44px;color:#5a5a5a;transform:scaleX(0.8789);transform-origin:0 0;">Review</div>
<div class="t" style="left:250.64px;top:549.93px;font-size:8.3px;line-height:10.79px;color:#707070;transform:scaleX(0.9535);transform-origin:0 0;">Oct 11</div>
<div class="t" style="left:294.90px;top:549.93px;font-size:8.3px;line-height:10.79px;color:#707070;transform:scaleX(0.9268);transform-origin:0 0;">Oct 16</div>
<div class="t" style="left:351.80px;top:549.93px;font-size:8.3px;line-height:10.79px;color:#707070;transform:scaleX(0.9284);transform-origin:0 0;">Oct 21</div>
<div class="t" style="left:408.70px;top:549.93px;font-size:8.3px;line-height:10.79px;color:#707070;transform:scaleX(0.9268);transform-origin:0 0;">Oct 26</div>
<div class="t" style="left:465.60px;top:549.93px;font-size:8.3px;line-height:10.79px;color:#707070;transform:scaleX(0.9284);transform-origin:0 0;">Oct 31</div>
<div class="r" style="left:251px;top:544.5px;width:248px;height:0;border-top:1px dashed #f1f1f1"></div>
<div class="r" style="left:502.50px;top:228.75px;width:489.50px;height:15.00px;background:#f0f0f1;"></div>
<div class="t" style="left:507.99px;top:230.33px;font-size:10px;line-height:13.0px;color:#333;transform:scaleX(0.9480);transform-origin:0 0;">Number of Open Opportunities and Average Days in Stage</div>
<svg class="r" style="left:777px;top:232px" width="9" height="9" viewBox="0 0 9 9"><path d="M4.5 0.3 L5.6 3.3 L8.8 3.4 L6.3 5.4 L7.2 8.6 L4.5 6.8 L1.8 8.6 L2.7 5.4 L0.2 3.4 L3.4 3.3 Z" fill="#3d74c6"/></svg>
<div class="t" style="left:788.09px;top:231.53px;font-size:8.5px;line-height:11.05px;color:#3d74c6;transform:scaleX(0.9539);transform-origin:0 0;">Click a Stage to Filter</div>
<div class="r" style="left:502.50px;top:245.90px;width:489.50px;height:1.00px;background:#ececec;"></div>
<div class="r" style="left:502.50px;top:260.47px;width:489.50px;height:1.00px;background:#ececec;"></div>
<div class="r" style="left:502.50px;top:275.04px;width:489.50px;height:1.00px;background:#ececec;"></div>
<div class="r" style="left:502.50px;top:289.61px;width:489.50px;height:1.00px;background:#ececec;"></div>
<div class="r" style="left:502.50px;top:304.18px;width:489.50px;height:1.00px;background:#ececec;"></div>
<div class="r" style="left:502.50px;top:318.75px;width:489.50px;height:1.00px;background:#ececec;"></div>
<div class="r" style="left:502.50px;top:333.32px;width:489.50px;height:1.00px;background:#ececec;"></div>
<div class="r" style="left:502.50px;top:347.89px;width:489.50px;height:1.00px;background:#ececec;"></div>
<div class="r" style="left:502.50px;top:362.46px;width:489.50px;height:1.00px;background:#ececec;"></div>
<div class="t" style="left:532.88px;top:248.83px;font-size:8.8px;line-height:11.44px;color:#5a5a5a;transform:scaleX(0.9435);transform-origin:0 0;">Qualification</div>
<div class="t" style="left:535.11px;top:263.40px;font-size:8.8px;line-height:11.44px;color:#5a5a5a;transform:scaleX(0.9129);transform-origin:0 0;">Prospecting</div>
<div class="t" style="left:524.46px;top:277.97px;font-size:8.8px;line-height:11.44px;color:#5a5a5a;transform:scaleX(0.9119);transform-origin:0 0;">Value Proposition</div>
<div class="t" style="left:528.87px;top:292.54px;font-size:8.8px;line-height:11.44px;color:#5a5a5a;transform:scaleX(0.8962);transform-origin:0 0;">Needs Analysis</div>
<div class="t" style="left:521.00px;top:307.11px;font-size:8.8px;line-height:11.44px;color:#5a5a5a;transform:scaleX(0.8862);transform-origin:0 0;">Id. Decision Makers</div>
<div class="t" style="left:521.07px;top:321.68px;font-size:8.8px;line-height:11.44px;color:#5a5a5a;transform:scaleX(0.9014);transform-origin:0 0;">Perception Analysis</div>
<div class="t" style="left:517.97px;top:336.25px;font-size:8.8px;line-height:11.44px;color:#5a5a5a;transform:scaleX(0.8916);transform-origin:0 0;">Proposal/Price Quote</div>
<div class="t" style="left:519.15px;top:350.82px;font-size:8.8px;line-height:11.44px;color:#5a5a5a;transform:scaleX(0.9217);transform-origin:0 0;">Negotiation/ Review</div>
<svg class="r" style="left:0;top:0" width="1000" height="575"><rect x="611.4" y="248.20" width="177.23" height="10.8" fill="#78bcd5"/><rect x="800.6" y="248.20" width="177.51" height="10.8" fill="#c3c3c3"/><rect x="611.4" y="262.77" width="160.08" height="10.8" fill="#8dcfd9"/><rect x="800.6" y="262.77" width="180.44" height="10.8" fill="#c3c3c3"/><rect x="611.4" y="277.34" width="154.36" height="10.8" fill="#87cbb3"/><rect x="800.6" y="277.34" width="171.39" height="10.8" fill="#c3c3c3"/><rect x="611.4" y="291.91" width="142.92" height="10.8" fill="#86c59b"/><rect x="800.6" y="291.91" width="171.15" height="10.8" fill="#c3c3c3"/><rect x="611.4" y="306.48" width="102.91" height="10.8" fill="#c9cf86"/><rect x="800.6" y="306.48" width="172.13" height="10.8" fill="#c3c3c3"/><rect x="611.4" y="321.05" width="97.19" height="10.8" fill="#e6d487"/><rect x="800.6" y="321.05" width="171.15" height="10.8" fill="#c3c3c3"/><rect x="611.4" y="335.62" width="57.17" height="10.8" fill="#f5cd80"/><rect x="800.6" y="335.62" width="171.15" height="10.8" fill="#c3c3c3"/><rect x="611.4" y="350.19" width="17.15" height="10.8" fill="#f2b97a"/><rect x="800.6" y="350.19" width="171.15" height="10.8" fill="#c3c3c3"/></svg>
<div class="t" style="left:611.38px;top:368.33px;font-size:8.3px;line-height:10.79px;color:#707070;">0</div>
<div class="t" style="left:663.63px;top:368.33px;font-size:8.3px;line-height:10.79px;color:#707070;">10</div>
<div class="t" style="left:720.63px;top:368.33px;font-size:8.3px;line-height:10.79px;color:#707070;">20</div>
<div class="t" style="left:778.37px;top:368.33px;font-size:8.3px;line-height:10.79px;color:#707070;">30</div>
<div class="t" style="left:801.28px;top:368.33px;font-size:8.3px;line-height:10.79px;color:#707070;">0</div>
<div class="t" style="left:845.33px;top:368.33px;font-size:8.3px;line-height:10.79px;color:#707070;">20</div>
<div class="t" style="left:894.26px;top:368.33px;font-size:8.3px;line-height:10.79px;color:#707070;">40</div>
<div class="t" style="left:943.03px;top:368.33px;font-size:8.3px;line-height:10.79px;color:#707070;">60</div>
<div class="r" style="left:611.00px;top:363.00px;width:0.80px;height:3.00px;background:#ddd;"></div>
<div class="r" style="left:668.20px;top:363.00px;width:0.80px;height:3.00px;background:#ddd;"></div>
<div class="r" style="left:725.30px;top:363.00px;width:0.80px;height:3.00px;background:#ddd;"></div>
<div class="r" style="left:782.50px;top:363.00px;width:0.80px;height:3.00px;background:#ddd;"></div>
<div class="r" style="left:800.20px;top:363.00px;width:0.80px;height:3.00px;background:#ddd;"></div>
<div class="r" style="left:849.10px;top:363.00px;width:0.80px;height:3.00px;background:#ddd;"></div>
<div class="r" style="left:898.00px;top:363.00px;width:0.80px;height:3.00px;background:#ddd;"></div>
<div class="r" style="left:946.90px;top:363.00px;width:0.80px;height:3.00px;background:#ddd;"></div>
<div class="t" style="left:680.63px;top:382.13px;font-size:8.3px;line-height:10.79px;color:#707070;transform:scaleX(0.9852);transform-origin:0 0;">Opportunities</div>
<svg class="r" style="left:734px;top:383px" width="9" height="8" viewBox="0 0 9 8"><path d="M0.5 1 H8 M0.5 3.5 H6 M0.5 6 H4" stroke="#707070" stroke-width="1.2"/></svg>
<div class="t" style="left:869.78px;top:382.13px;font-size:8.3px;line-height:10.79px;color:#707070;transform:scaleX(0.9342);transform-origin:0 0;">Days in Stage</div>
<div class="r" style="left:502.00px;top:400.00px;width:490.00px;height:15.00px;background:#f0f0f1;"></div>
<div class="t" style="left:508.21px;top:401.33px;font-size:10px;line-height:13.0px;color:#333;transform:scaleX(0.9722);transform-origin:0 0;">Top 10 Opportunities</div>
<div class="r" style="left:602.30px;top:404.60px;width:1.00px;height:7.60px;background:#888;"></div>
<div class="t" style="left:606.08px;top:403.03px;font-size:8.3px;line-height:10.79px;color:#333;transform:scaleX(0.9705);transform-origin:0 0;">by Expected Amount</div>
<div class="r" style="left:502.00px;top:431.97px;width:490.00px;height:1.00px;background:#e9e9e9;"></div>
<div class="r" style="left:772.00px;top:418.00px;width:106.00px;height:13.00px;background:#f3c979;"></div>
<div class="t" style="left:506.31px;top:419.13px;font-size:8.8px;line-height:11.44px;color:#5a5a5a;transform:scaleX(0.8687);transform-origin:0 0;">Id Sapien Cras Corporation 5</div>
<div class="t" style="left:810.62px;top:419.33px;font-size:8.7px;line-height:11.31px;color:#4a4a4a;transform:scaleX(0.9337);transform-origin:0 0;">$75,000</div>
<div class="r" style="left:502.00px;top:446.64px;width:490.00px;height:1.00px;background:#e9e9e9;"></div>
<div class="r" style="left:772.00px;top:432.00px;width:106.00px;height:14.00px;background:#c3c97e;"></div>
<div class="t" style="left:506.66px;top:433.80px;font-size:8.8px;line-height:11.44px;color:#5a5a5a;transform:scaleX(0.8636);transform-origin:0 0;">Sagittis Felis Donec PC 8</div>
<div class="t" style="left:810.62px;top:434.00px;font-size:8.7px;line-height:11.31px;color:#4a4a4a;transform:scaleX(0.9337);transform-origin:0 0;">$72,000</div>
<div class="r" style="left:502.00px;top:461.31px;width:490.00px;height:1.00px;background:#e9e9e9;"></div>
<div class="r" style="left:772.00px;top:447.00px;width:106.00px;height:14.00px;background:#e6cf7c;"></div>
<div class="t" style="left:506.37px;top:448.47px;font-size:8.8px;line-height:11.44px;color:#5a5a5a;transform:scaleX(0.8971);transform-origin:0 0;">Mi Ltd 13</div>
<div class="t" style="left:810.62px;top:448.67px;font-size:8.7px;line-height:11.31px;color:#4a4a4a;transform:scaleX(0.9337);transform-origin:0 0;">$28,000</div>
<div class="r" style="left:502.00px;top:475.98px;width:490.00px;height:1.00px;background:#e9e9e9;"></div>
<div class="r" style="left:772.00px;top:462.00px;width:106.00px;height:13.00px;background:#78c6a6;"></div>
<div class="t" style="left:506.30px;top:463.14px;font-size:8.8px;line-height:11.44px;color:#5a5a5a;transform:scaleX(0.8869);transform-origin:0 0;">Inceptos Hymenaeos Mauris Associates 4</div>
<div class="t" style="left:810.62px;top:463.34px;font-size:8.7px;line-height:11.31px;color:#4a4a4a;transform:scaleX(0.9337);transform-origin:0 0;">$15,000</div>
<div class="r" style="left:502.00px;top:490.65px;width:490.00px;height:1.00px;background:#e9e9e9;"></div>
<div class="r" style="left:772.00px;top:476.00px;width:106.00px;height:14.00px;background:#a0cfa6;"></div>
<div class="t" style="left:506.40px;top:477.81px;font-size:8.8px;line-height:11.44px;color:#5a5a5a;transform:scaleX(0.8526);transform-origin:0 0;">Nec Tempus Corp. 13</div>
<div class="t" style="left:810.62px;top:478.01px;font-size:8.7px;line-height:11.31px;color:#4a4a4a;transform:scaleX(0.9337);transform-origin:0 0;">$10,000</div>
<div class="r" style="left:502.00px;top:505.32px;width:490.00px;height:1.00px;background:#e9e9e9;"></div>
<div class="r" style="left:772.00px;top:491.00px;width:106.00px;height:14.00px;background:#6fb9d3;"></div>
<div class="t" style="left:506.42px;top:492.48px;font-size:8.8px;line-height:11.44px;color:#5a5a5a;transform:scaleX(0.8219);transform-origin:0 0;">Ligula Aenean PC 2</div>
<div class="t" style="left:812.52px;top:492.68px;font-size:8.7px;line-height:11.31px;color:#4a4a4a;transform:scaleX(0.9607);transform-origin:0 0;">$4,000</div>
<div class="r" style="left:502.00px;top:519.99px;width:490.00px;height:1.00px;background:#e9e9e9;"></div>
<div class="r" style="left:772.00px;top:506.00px;width:106.00px;height:13.00px;background:#88c9df;"></div>
<div class="t" style="left:506.41px;top:507.15px;font-size:8.8px;line-height:11.44px;color:#5a5a5a;transform:scaleX(0.8354);transform-origin:0 0;">Et Netus Corporation 10</div>
<div class="t" style="left:812.52px;top:507.35px;font-size:8.7px;line-height:11.31px;color:#4a4a4a;transform:scaleX(0.9607);transform-origin:0 0;">$3,500</div>
<div class="r" style="left:502.00px;top:534.66px;width:490.00px;height:1.00px;background:#e9e9e9;"></div>
<div class="r" style="left:772.00px;top:520.00px;width:106.00px;height:14.00px;background:#ebd88e;"></div>
<div class="t" style="left:506.38px;top:521.82px;font-size:8.8px;line-height:11.44px;color:#5a5a5a;transform:scaleX(0.8788);transform-origin:0 0;">Donec Foundation 13</div>
<div class="t" style="left:812.52px;top:522.02px;font-size:8.7px;line-height:11.31px;color:#4a4a4a;transform:scaleX(0.9607);transform-origin:0 0;">$3,500</div>
<div class="r" style="left:502.00px;top:549.33px;width:490.00px;height:1.00px;background:#e9e9e9;"></div>
<div class="r" style="left:772.00px;top:535.00px;width:106.00px;height:14.00px;background:#8fd0dc;"></div>
<div class="t" style="left:506.37px;top:536.49px;font-size:8.8px;line-height:11.44px;color:#5a5a5a;transform:scaleX(0.8922);transform-origin:0 0;">Mauris Molestie Pharetra Company 15</div>
<div class="t" style="left:812.52px;top:536.69px;font-size:8.7px;line-height:11.31px;color:#4a4a4a;transform:scaleX(0.9607);transform-origin:0 0;">$3,000</div>
<div class="r" style="left:502.00px;top:564.00px;width:490.00px;height:1.00px;background:#e9e9e9;"></div>
<div class="r" style="left:772.00px;top:550.00px;width:106.00px;height:13.00px;background:#92d3df;"></div>
<div class="t" style="left:506.39px;top:551.16px;font-size:8.8px;line-height:11.44px;color:#5a5a5a;transform:scaleX(0.8666);transform-origin:0 0;">Nunc Corp. 8</div>
<div class="t" style="left:812.52px;top:551.36px;font-size:8.7px;line-height:11.31px;color:#4a4a4a;transform:scaleX(0.9607);transform-origin:0 0;">$2,000</div>
<div class="r" style="left:502.00px;top:417.30px;width:490.00px;height:1.00px;background:#e9e9e9;"></div>
</body></html>
